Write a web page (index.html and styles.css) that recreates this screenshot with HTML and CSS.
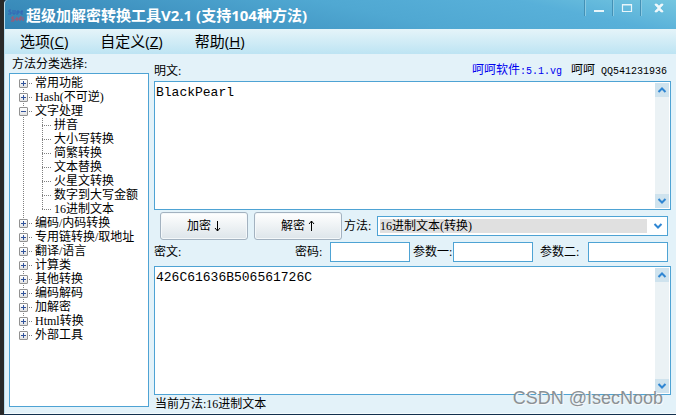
FILE: index.html
```html
<!DOCTYPE html>
<html lang="zh-CN">
<head>
<meta charset="utf-8">
<title>超级加解密转换工具V2.1</title>
<link rel="stylesheet" href="styles.css">
</head>
<body>
<div class="window">
  <header class="titlebar">
    <svg class="logo" viewBox="0 0 16 16" aria-hidden="true">
      <path d="M3 3H1v2h2v2H0M5 3v4h2V3M9 8V4h2v2H9M15 4h-2v3h2M13 5h2" fill="none" stroke="#3465b4" stroke-width="1"/>
      <path d="M6 10H4v2h2v2H3M8 11h2v2H8zM12 14v-4h2M11 12h3M15 10v4" fill="none" stroke="#b0506c" stroke-width="1"/>
    </svg>
    <h1 class="title">超级加解密转换工具V2.1 (支持104种方法)</h1>
    <div class="controls">
      <button class="control" type="button" aria-label="最小化"><svg viewBox="0 0 12 10"><path d="M1 8h10" stroke="#e8f5fa" stroke-width="2"/></svg></button>
      <button class="control" type="button" aria-label="最大化"><svg viewBox="0 0 12 10"><path d="M1.500 1.500h9v7h-9z M1 2h10" fill="none" stroke="#e8f5fa" stroke-width="1.200"/></svg></button>
      <button class="control close" type="button" aria-label="关闭"><svg viewBox="0 0 12 10"><path d="M2 1h2l2 2 2-2h2v1L7 5l3 3v1H8L6 7 4 9H2V8l3-3-3-3z" fill="#eef8fb" stroke="#eef8fb" stroke-width=".6"/></svg></button>
    </div>
  </header>
  <nav class="menu">
    <a href="#">选项(<u>C</u>)</a>
    <a href="#">自定义(<u>Z</u>)</a>
    <a href="#">帮助(<u>H</u>)</a>
  </nav>
  <main class="content">
    <section class="sidebar">
      <h2 class="caption">方法分类选择:</h2>
      <div class="tree-box">
        <ul class="tree">
          <li><div class="row"><button class="toggle" type="button" aria-label="展开"></button>常用功能</div></li>
          <li><div class="row"><button class="toggle" type="button" aria-label="展开"></button>Hash(不可逆)</div></li>
          <li><div class="row"><button class="toggle open" type="button" aria-label="折叠"></button>文字处理</div>
            <ul class="branch">
              <li>拼音</li>
              <li>大小写转换</li>
              <li>简繁转换</li>
              <li>文本替换</li>
              <li>火星文转换</li>
              <li>数字到大写金额</li>
              <li>16进制文本</li>
            </ul>
          </li>
          <li><div class="row"><button class="toggle" type="button" aria-label="展开"></button>编码/内码转换</div></li>
          <li><div class="row"><button class="toggle" type="button" aria-label="展开"></button>专用链转换/取地址</div></li>
          <li><div class="row"><button class="toggle" type="button" aria-label="展开"></button>翻译/语言</div></li>
          <li><div class="row"><button class="toggle" type="button" aria-label="展开"></button>计算类</div></li>
          <li><div class="row"><button class="toggle" type="button" aria-label="展开"></button>其他转换</div></li>
          <li><div class="row"><button class="toggle" type="button" aria-label="展开"></button>编码解码</div></li>
          <li><div class="row"><button class="toggle" type="button" aria-label="展开"></button>加解密</div></li>
          <li><div class="row"><button class="toggle" type="button" aria-label="展开"></button>Html转换</div></li>
          <li><div class="row"><button class="toggle" type="button" aria-label="展开"></button>外部工具</div></li>
        </ul>
      </div>
    </section>
    <section class="work">
      <div class="heading">
        <label for="plain">明文:</label>
        <p class="credit"><a href="#">呵呵软件<span class="mono">:5.1.vg</span></a><span>呵呵<span class="mono"> QQ541231936</span></span></p>
      </div>
      <div class="editor">
        <textarea id="plain" spellcheck="false">BlackPearl</textarea>
        <div class="scroll">
          <button type="button" aria-label="向上"><svg viewBox="0 0 14 14"><path d="M3.500 9L7 5.500 10.500 9" fill="none" stroke="#2f86d3" stroke-width="2"/></svg></button>
          <button type="button" aria-label="向下"><svg viewBox="0 0 14 14"><path d="M3.500 5L7 8.500 10.500 5" fill="none" stroke="#2f86d3" stroke-width="2"/></svg></button>
        </div>
      </div>
      <div class="actions">
        <button class="action" type="button">加密<svg viewBox="0 0 7 12"><path d="M3.500 1v10M1 8l2.500 3L6 8" fill="none" stroke="#000"/></svg></button>
        <button class="action" type="button">解密<svg viewBox="0 0 7 12"><path d="M3.500 11V1M1 4l2.500-3L6 4" fill="none" stroke="#000"/></svg></button>
        <label class="method-label" for="method">方法:</label>
        <div class="combo">
          <select id="method"><option>16进制文本(转换)</option></select>
          <svg viewBox="0 0 14 14" aria-hidden="true"><path d="M3.500 5L7 8.500 10.500 5" fill="none" stroke="#2f86d3" stroke-width="2"/></svg>
        </div>
      </div>
      <div class="params">
        <label class="cipher-label" for="cipher">密文:</label>
        <label for="password">密码:</label><input id="password" type="text">
        <label class="first" for="p1">参数一:</label><input id="p1" type="text">
        <label for="p2">参数二:</label><input id="p2" type="text">
      </div>
      <div class="editor">
        <textarea id="cipher" spellcheck="false">426C61636B506561726C</textarea>
        <div class="scroll">
          <button type="button" aria-label="向上"><svg viewBox="0 0 14 14"><path d="M3.500 9L7 5.500 10.500 9" fill="none" stroke="#2f86d3" stroke-width="2"/></svg></button>
          <button type="button" aria-label="向下"><svg viewBox="0 0 14 14"><path d="M3.500 5L7 8.500 10.500 5" fill="none" stroke="#2f86d3" stroke-width="2"/></svg></button>
        </div>
      </div>
      <p class="status">当前方法:16进制文本</p>
    </section>
  </main>
</div>
<div class="watermark">CSDN @IsecNoob</div>
</body>
</html>
```
FILE: styles.css
```css
* { box-sizing: border-box; }

body {
  margin: 0;
  min-height: 100vh;
  display: flex;
  padding: 0 0 1px 4px;
  background: linear-gradient(90deg, #292929 4px, #12304d 4px);
  font: 12px/14px "Liberation Serif", "Noto Sans CJK SC", serif;
  color: #000;
}

h1, h2, p, ul { margin: 0; padding: 0; font: inherit; }
ul { list-style: none; }
button, input, select, textarea { font: inherit; color: inherit; margin: 0; border-radius: 0; }
a { color: inherit; text-decoration: none; }
svg { display: block; }

.window {
  flex: 1;
  min-width: 0;
  display: flex;
  flex-direction: column;
  background: #e3f2f9;
  border-left: 1px solid #b8dced;
  border-bottom: 1px solid #f4fafd;
  border-top-left-radius: 4px;
  overflow: hidden;
}

.titlebar {
  display: flex;
  align-items: center;
  height: 29px;
  padding-left: 3px;
  background: linear-gradient(12deg, #3282b2 0%, #3f92c0 25%, #50a8d2 55%, #58b0d9 80%, #74c6e0 100%);
}
.logo { width: 16px; height: 16px; margin-right: 2px; }
.title {
  flex: 1;
  font: bold 15px/28px "Open Sans", "Noto Sans CJK SC", sans-serif;
  color: #fff;
  white-space: nowrap;
}
.controls { display: flex; align-self: flex-start; }
.control {
  display: grid;
  place-items: center;
  width: 28px;
  height: 16px;
  padding: 0;
  border: 0;
  border-left: 1px solid #4391b6;
  background: linear-gradient(90deg, #8bcae2 1px, transparent 1px);
}
.control svg { width: 12px; height: 10px; }
.control.close { width: 36px; }

.menu {
  display: flex;
  align-items: center;
  gap: 32px;
  height: 25px;
  padding-left: 15px;
  background: linear-gradient(#e5f4f9, #bde4f3);
  font: 15px/25px "Open Sans", "Noto Sans CJK SC", sans-serif;
}

.content {
  flex: 1;
  display: flex;
  gap: 5px;
  padding: 3px 5px 2px 4px;
}

.sidebar {
  width: 140px;
  display: flex;
  flex-direction: column;
  padding-bottom: 4px;
}
.caption { height: 16px; padding-left: 3px; }
.tree-box {
  flex: 1;
  padding: 2px 0 0 9px;
  border: 1px solid #4ea3d4;
  background: #fff;
}
.tree {
  line-height: 14px;
  white-space: nowrap;
  background: repeating-linear-gradient(#808080 0 1px, transparent 1px 2px) 4px 7px / 1px calc(100% - 14px) no-repeat;
}
.row {
  display: flex;
  align-items: center;
  gap: 7px;
  height: 14px;
  background: repeating-linear-gradient(90deg, #808080 0 1px, transparent 1px 2px) 10px 7px / 4px 1px no-repeat;
}
.toggle {
  width: 9px;
  height: 9px;
  padding: 0;
  border: 1px solid #919191;
  border-radius: 1px;
  background:
    linear-gradient(#31539b, #31539b) center / 5px 1px no-repeat,
    linear-gradient(#31539b, #31539b) center / 1px 5px no-repeat,
    linear-gradient(#fff, #e2e2e2);
}
.toggle.open {
  background:
    linear-gradient(#31539b, #31539b) center / 5px 1px no-repeat,
    linear-gradient(#fff, #e2e2e2);
}
.branch {
  margin-left: 23px;
  background: repeating-linear-gradient(#808080 0 1px, transparent 1px 2px) 0 0 / 1px calc(100% - 7px) no-repeat;
}
.branch li {
  height: 14px;
  padding-left: 12px;
  background: repeating-linear-gradient(90deg, #808080 0 1px, transparent 1px 2px) 0 7px / 9px 1px no-repeat;
}

.work {
  flex: 1;
  min-width: 0;
  display: flex;
  flex-direction: column;
}
.heading {
  display: flex;
  justify-content: space-between;
  align-items: center;
  height: 24px;
  padding: 4px 4px 0 0;
}
.credit { display: flex; gap: 9px; }
.credit a { color: #0000f0; }
.mono { font-family: "Liberation Mono", monospace; font-size: 10px; }

.editor {
  flex: 1;
  display: flex;
  min-height: 80px;
  border: 1px solid #4ea3d4;
  background: #fff;
}
.editor textarea {
  flex: 1;
  min-width: 0;
  padding: 2px 1px;
  border: 0;
  outline: 0;
  resize: none;
  background: transparent;
  font: 13px/18px "Liberation Mono", monospace;
}
.scroll {
  display: flex;
  flex-direction: column;
  justify-content: space-between;
  width: 14px;
  margin: 1px;
  background: #ebf2f5;
}
.scroll button {
  height: 14px;
  padding: 0;
  border: 0;
  background: #cfe3ee;
}

.actions {
  display: flex;
  align-items: center;
  height: 32px;
  padding: 0 3px 0 6px;
}
.action {
  display: flex;
  align-items: center;
  justify-content: center;
  gap: 3px;
  width: 88px;
  height: 28px;
  margin-right: 6px;
  padding: 0;
  border: 1px solid #a3b2c0;
  border-radius: 3px;
  background: linear-gradient(#fff, #dde5ea);
  box-shadow: inset 0 0 0 1px #f4f8fa;
}
.action svg { width: 7px; height: 12px; }
.method-label { width: 29px; margin-left: -4px; margin-right: 4px; white-space: nowrap; }
.combo {
  flex: 1;
  display: flex;
  align-items: center;
  height: 20px;
  padding: 2px;
  border: 1px solid #4ea3d4;
  background: #fff;
}
.combo select {
  flex: 1;
  min-width: 0;
  height: 14px;
  padding: 0;
  border: 0;
  appearance: none;
  background: #e0e0e0;
}
.combo svg { width: 14px; height: 14px; margin-left: 4px; }

.params {
  display: flex;
  align-items: center;
  height: 24px;
  padding: 0 3px 4px 0;
  white-space: nowrap;
}
.params label { margin-left: 7px; width: 48px; }
.params label[for="password"] { width: 35px; margin-left: 0; }
.params .cipher-label { flex: 1; margin-left: 0; }
.params .first { width: 40px; margin-left: 3px; }
.params input {
  width: 80px;
  height: 20px;
  border: 1px solid #4ea3d4;
  background: #fff;
}

.status { height: 16px; padding: 2px 0 0 1px; }

.watermark {
  position: absolute;
  right: 13px;
  bottom: 6px;
  font: 18px/22px "Liberation Sans", sans-serif;
  color: #8b9195;
  text-shadow: 1px 1px 0 #f7f7f7;
}
```
